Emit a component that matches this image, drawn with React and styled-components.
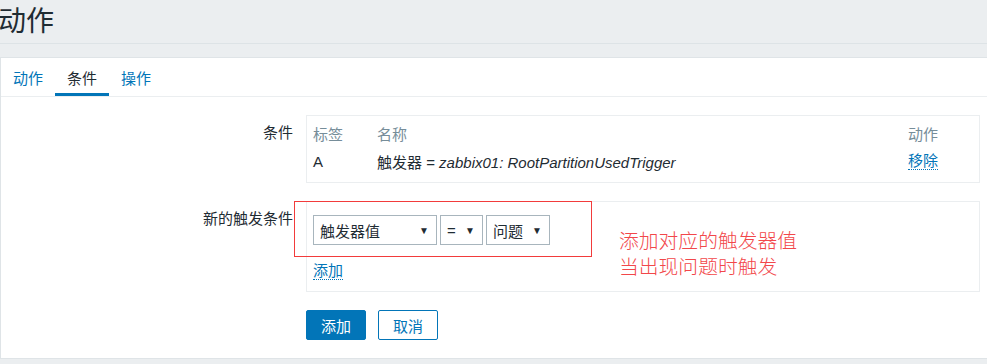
import React from 'react';
import styled, { createGlobalStyle } from 'styled-components';

const GlobalStyle = createGlobalStyle`
  html, body {
    margin: 0;
    padding: 0;
    background: #ebeef0;
    font-family: "Liberation Sans", "Noto Sans CJK SC", sans-serif;
    color: #1f2c33;
    font-size: 15px;
  }
`;

// HEADER
const Header = styled.div`
  height: 43px;
  border-bottom: 1px solid #dde3e6;
  display: flex;
  align-items: center;
  overflow: hidden;
`;

const Title = styled.h1`
  margin: 0 0 0 -2px;
  font-weight: normal;
  font-size: 28px;
  color: #1f2c33;
  line-height: 1;
`;

// PAGE CARD
const Card = styled.div`
  margin-top: 13px;
  background: #fff;
  border-top: 1px solid #dfe4e7;
  border-left: 1px solid #dfe4e7;
  border-bottom: 1px solid #dfe4e7;
  position: relative;
`;

const Tabs = styled.div`
  display: flex;
  height: 38px;
  border-bottom: 1px solid #ebeef0;
`;

const Tab = styled.div`
  display: flex;
  align-items: center;
  padding: 3px 12px 0;
  color: ${p => (p.$active ? '#1f2c33' : '#0275b8')};
  border-bottom: 3px solid ${p => (p.$active ? '#0275b8' : 'transparent')};
  box-sizing: border-box;
`;

const Form = styled.div`
  display: grid;
  grid-template-columns: 292px 674px;
  column-gap: 13px;
  row-gap: 18px;
  padding: 18px 0 18px;
`;

const Label = styled.div`
  text-align: right;
  padding-top: 6px;
  white-space: nowrap;
`;

const Box = styled.div`
  border: 1px solid #ebeef0;
  box-sizing: border-box;
`;

const ListBox = styled(Box)`
  height: 68px;
  padding: 3px 41px 0 6px;
  display: grid;
  grid-template-columns: 64px 1fr auto;
  grid-template-rows: 28px 28px;
  align-items: center;
`;

const Th = styled.div`
  color: #768d99;
`;

const Italic = styled.span`
  font-style: italic;
`;

const Link = styled.span`
  color: #0275b8;
  border-bottom: 1px dotted #0275b8;
  line-height: 17px;
  justify-self: start;
`;

const NewBox = styled(Box)`
  height: 91px;
  padding: 13px 6px 0;
  display: flex;
  flex-direction: column;
  align-items: flex-start;
  gap: 17px;
`;

const Selects = styled.div`
  display: flex;
  gap: 3px;
`;

const Select = styled.div`
  width: ${p => p.$w}px;
  height: 30px;
  box-sizing: border-box;
  border: 1px solid #a8b5bd;
  display: flex;
  align-items: center;
  justify-content: space-between;
  padding: 0 7px 0 6px;
  color: #1f2c33;
`;

const Arrow = styled.span`
  font-size: 10px;
  color: #1f2c33;
`;

const Buttons = styled.div`
  grid-column: 2;
  display: flex;
  gap: 12px;
`;

const Button = styled.button`
  height: 30px;
  width: ${p => p.$w}px;
  border-radius: 2px;
  border: 1px solid #0275b8;
  background: ${p => (p.$primary ? '#0275b8' : '#fff')};
  color: ${p => (p.$primary ? '#fff' : '#0275b8')};
  font-family: inherit;
  font-size: 15px;
  padding: 0;
`;

// ANNOTATIONS (drawn over the form)
const RedFrame = styled.div`
  position: absolute;
  left: 293px;
  top: 143px;
  width: 298px;
  height: 56px;
  border: 1px solid #f23b3b;
  box-sizing: border-box;
`;

const Note = styled.div`
  position: absolute;
  left: 618px;
  top: 169px;
  color: #f2474a;
  font-size: 19.8px;
  line-height: 26px;
  font-family: "Noto Sans CJK SC", sans-serif;
  font-weight: 300;
`;

export default function App() {
  return (
    <>
      <GlobalStyle />
      <Header>
        <Title>动作</Title>
      </Header>
      <Card>
        <Tabs>
          <Tab>动作</Tab>
          <Tab $active>条件</Tab>
          <Tab>操作</Tab>
        </Tabs>
        <Form>
          <Label>条件</Label>
          <ListBox>
            <Th>标签</Th>
            <Th>名称</Th>
            <Th>动作</Th>
            <div>A</div>
            <div>触发器 = <Italic>zabbix01: RootPartitionUsedTrigger</Italic></div>
            <Link>移除</Link>
          </ListBox>

          <Label>新的触发条件</Label>
          <NewBox>
            <Selects>
              <Select $w={124}>触发器值<Arrow>▼</Arrow></Select>
              <Select $w={43}>=<Arrow>▼</Arrow></Select>
              <Select $w={64}>问题<Arrow>▼</Arrow></Select>
            </Selects>
            <Link>添加</Link>
          </NewBox>

          <Buttons>
            <Button $primary $w={60}>添加</Button>
            <Button $w={60}>取消</Button>
          </Buttons>
        </Form>
        <RedFrame />
        <Note>
          添加对应的触发器值<br />当出现问题时触发
        </Note>
      </Card>
    </>
  );
}
